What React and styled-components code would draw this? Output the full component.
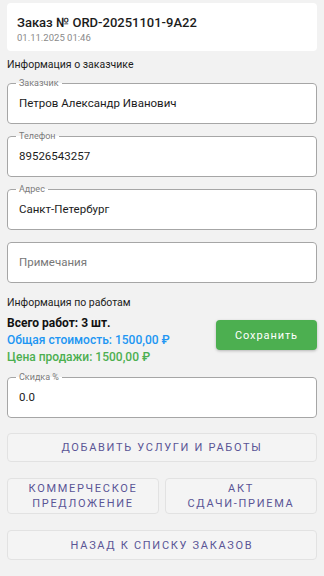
import React from 'react'
import styled, { createGlobalStyle } from 'styled-components'

const GlobalStyle = createGlobalStyle`
    body {
        margin: 0;
        background: #f2f2f2;
        font-family: Roboto, "Noto Sans", sans-serif;
        color: #1c1c1c;
    }
`

const Page = styled.div`
    padding: 3px 7px 16px;
    display: flex;
    flex-direction: column;
`

const Header = styled.div`
    background: #fff;
    border-radius: 4px;
    padding: 12px 10px 9px;
    height: 48px;
    box-sizing: border-box;
`

const Title = styled.div`
    font-size: 13px;
    font-weight: 500;
    line-height: 15px;
`

const DateText = styled.div`
    font-size: 9.5px;
    color: #8a8a8a;
    line-height: 14px;
    margin-top: 1px;
`

const SectionTitle = styled.div`
    font-size: 10.5px;
    line-height: 14px;
    margin: ${p => p.$top}px 0 ${p => p.$bottom}px;
`

const Fields = styled.div`
    display: flex;
    flex-direction: column;
    gap: 7px;
`

const Field = styled.fieldset`
    margin: 0;
    padding: 0 8px;
    min-width: 0;
    border: 1px solid #a6a6a6;
    border-radius: 4px;
    background: #fff;

    legend {
        height: 10px;
        line-height: 10px;
        font-size: 9px;
        color: #7a7a7a;
        padding: ${p => (p.$empty ? '0' : '0 3px')};
        max-width: ${p => (p.$empty ? '0.01px' : 'none')};
        overflow: hidden;
    }
`

const Value = styled.div`
    font-size: 11.5px;
    line-height: 18px;
    padding: 6px 3px 11px;
    color: ${p => (p.$placeholder ? '#777' : '#1c1c1c')};
`

const WorkRow = styled.div`
    display: flex;
    justify-content: space-between;
    align-items: flex-start;
    margin-bottom: 6px;
`

const Totals = styled.div`
    display: flex;
    flex-direction: column;
`

const TotalLine = styled.div`
    font-size: 12px;
    line-height: 17px;
    font-weight: ${p => (p.$bold ? 700 : 500)};
    color: ${p => p.$color || '#111'};
`

const SaveButton = styled.button`
    margin-top: 5px;
    width: 101px;
    height: 30px;
    border: none;
    border-radius: 4px;
    background: #4caf50;
    color: #fff;
    font-family: inherit;
    font-size: 11px;
    font-weight: 400;
    letter-spacing: 0.9px;
    box-shadow: 0 1px 3px rgba(0, 0, 0, 0.25);
`

const Actions = styled.div`
    display: flex;
    flex-direction: column;
    gap: 15px;
    margin-top: 15px;
`

const ActionPair = styled.div`
    display: grid;
    grid-template-columns: 1fr 1fr;
    gap: 6px;
    margin: 1px 0;
`

const ActionButton = styled.button`
    height: ${p => p.$h}px;
    border: 1px solid #e2e2e2;
    border-radius: 4px;
    background: #f4f4f4;
    color: #5a5596;
    font-family: inherit;
    font-size: 11px;
    font-weight: 400;
    line-height: 15px;
    letter-spacing: 1.7px;
    text-transform: uppercase;
    padding: 0 4px;
`

function InputField({ label, value }) {
    return (
        <Field $empty={!label}>
            <legend>{label}</legend>
            <Value $placeholder={!label}>{value}</Value>
        </Field>
    )
}

export default function App() {
    return (
        <Page>
            <GlobalStyle />
            <Header>
                <Title>Заказ № ORD-20251101-9A22</Title>
                <DateText>01.11.2025 01:46</DateText>
            </Header>

            <SectionTitle $top={7} $bottom={6}>Информация о заказчике</SectionTitle>
            <Fields>
                <InputField label="Заказчик" value="Петров Александр Иванович" />
                <InputField label="Телефон" value="89526543257" />
                <InputField label="Адрес" value="Санкт-Петербург" />
                <InputField value="Примечания" />
            </Fields>

            <SectionTitle $top={13} $bottom={5}>Информация по работам</SectionTitle>
            <WorkRow>
                <Totals>
                    <TotalLine $bold>Всего работ: 3 шт.</TotalLine>
                    <TotalLine $color="#2196f3">Общая стоимость: 1500,00 ₽</TotalLine>
                    <TotalLine $color="#4caf50">Цена продажи: 1500,00 ₽</TotalLine>
                </Totals>
                <SaveButton type="button">Сохранить</SaveButton>
            </WorkRow>
            <InputField label="Скидка %" value="0.0" />

            <Actions>
                <ActionButton $h={29} type="button">Добавить услуги и работы</ActionButton>
                <ActionPair>
                    <ActionButton $h={36} type="button">Коммерческое<br />предложение</ActionButton>
                    <ActionButton $h={36} type="button">Акт<br />сдачи-приема</ActionButton>
                </ActionPair>
                <ActionButton $h={30} type="button">Назад к списку заказов</ActionButton>
            </Actions>
        </Page>
    )
}
